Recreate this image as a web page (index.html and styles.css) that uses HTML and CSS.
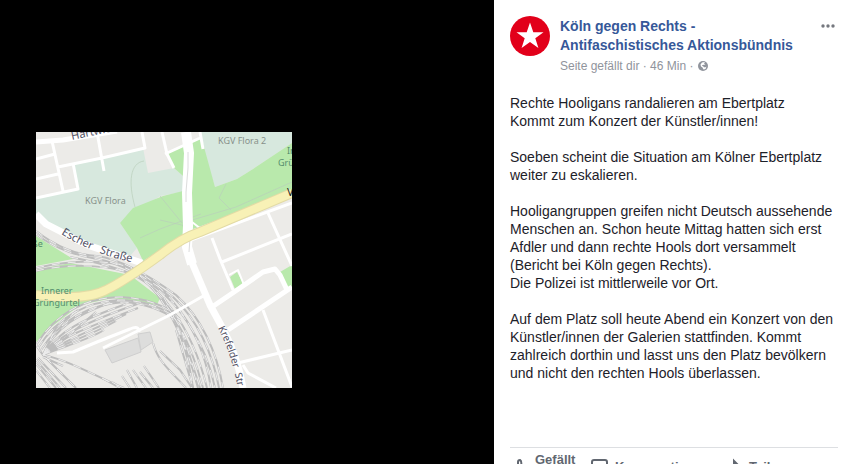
FILE: index.html
```html
<!DOCTYPE html>
<html lang="de">
<head>
    <meta charset="UTF-8">
    <meta name="viewport" content="width=device-width, initial-scale=1.0">
    <title>Köln gegen Rechts</title>
    <link rel="stylesheet" href="styles.css">
</head>
<body>

    <div class="viewer">
        <div class="stage">
            <svg class="map" viewBox="0 0 256 256" role="img" aria-label="Karte">
                <defs>
                    <g id="tracks">
                        <!-- main line -->
                        <path d="M0 99C22 116 42 123 61 124C90 128 122 150 140 163C165 185 181 220 187 256" />
                        <path d="M0 102C22 119 45 124 61 127C90 132 118 151 137 165C161 187 177 222 183 256" />
                        <path d="M34 125C65 131 95 139 113 151C140 167 170 210 179 256" />
                        <path d="M0 136C30 129 60 128 82 132C108 139 126 156 138 171C158 195 170 225 175 256" />
                        <path d="M0 139C30 132 65 132 90 140C120 150 155 190 171 256" />
                        <path d="M96 140C125 158 152 198 167 256" />
                        <path d="M104 144C127 163 148 202 162 256" />
                        <path d="M128 166C140 185 152 220 157 256" />
                        <path d="M140 198L157 256" />
                        <path d="M146 200L164 256" />
                        <!-- outer loop -->
                        <path d="M0 213C20 181 48 166 84 165C112 166 132 175 144 187" />
                        <path d="M2 216C22 184 52 169 86 168C112 169 132 178 144 190" />
                        <path d="M5 218C25 187 55 172 88 170C112 172 128 179 140 188" />
                        <!-- yard -->
                        <path d="M7 223C18 197 40 182 82 168" />
                        <path d="M7 223C22 199 48 187 90 172" />
                        <path d="M7 223C20 205 50 190 104 171" />
                        <path d="M7 223C20 207 55 194 102 176" />
                        <path d="M7 223C25 209 60 197 90 182" />
                        <path d="M7 223C25 212 50 206 80 189" />
                        <path d="M7 223C22 216 48 210 68 198" />
                        <path d="M7 223L30 206L60 180" />
                        <path d="M7 223L20 196L42 178" />
                        <path d="M0 213L7 223L40 256" />
                        <path d="M0 228L24 256M0 232L20 256M0 238L14 256M2 226L30 256" />
                        <path d="M7 223C32 228 55 242 88 256" />
                        <path d="M7 225L27 234" />
                        <path d="M117 211C122 230 134 238 150 256" />
                        <path d="M124 219L144 238L156 256" />
                        <path d="M66 246L84 256M76 250L86 256M91 238L101 256M86 244L94 256M97 238L110 256M104 240L117 256M108 234L123 256M90 250L94 256" />
                    </g>
                    <path id="escher" d="M25 102Q58 123 104 132" />
                    <path id="krefelder" d="M182 196Q198 226 204 270" />
                </defs>

                <rect class="ground" width="256" height="256" />
                <path class="garden" d="M37 32L107 16L112 41L138 36L147 44V60L124 64L84 91L101 116L94 124L51 111L0 84V66L42 57Z" />
                <path class="garden" d="M164 0H256V11L217 37L201 47L179 55L167 17Z" />
                <path class="park" d="M84 91L97 76L127 64L147 59V44L138 36L131 22L157 9L165 4L179 55L201 47L217 37L256 11V60L157 97L107 129L101 116Z" />
                <path class="park" d="M0 104L37 127L0 134Z" />
                <path class="park" d="M0 138L34 131L94 143L124 166L121 173L77 166L44 173L14 196L0 210Z" />
                <path class="park" d="M194 145L201 140L207 151L199 157ZM244 140L256 133V155H251Z" />
                <path class="building" d="M69 218L102 206L105 220L76 231ZM102 202L114 200L117 210L105 218Z" />
                <path class="trail" d="M108 29C94 31 92 50 99 75M124 64L146 91L200 75L256 50M190 52L183 66L195 78M124 88L150 94M104 106L124 97L165 82" />

                <use class="rail" href="#tracks" />
                <use class="rail-gap" href="#tracks" />

                <path class="road" d="M0 27L19 22M16 9L27 59M22 35L66 26L109 16L106 0M0 47L22 42M0 66L42 57L37 31M61 0L68 39" />
                <path class="road" d="M126 0L131 22L138 36M129 22L164 6M164 0L167 17" />
                <path class="road" d="M176 106L184 127L197 158M232 81L256 134M186 130L256 102M227 178L256 255M202 231L256 218M207 233L212 241L240 256" />
                <path class="road" d="M144 112L256 71M67 216L134 183L169 163M21 221L37 220L61 210L94 197Q103 193 103 200" />
                <path class="road thin" d="M193 143L202 138L208 153M156 90L165 97" />
                <path class="road wide" d="M0 10L27 8L81 -1M176 175L204 156L227 140L239 137L244 143L252 160M192 198L256 155" />
                <path class="road wider" d="M0 82L10 92L51 113L106 131" />
                <path class="road main" d="M150 0L153 21L151 61L152 94L151 115L156 132" />
                <path class="road wider" d="M154 126L174 173L186 195Q202 225 207 256" />
                <path class="median" d="M152 20V36L150 60V70M154 106L153 120" />
                <path class="artery-edge" d="M0 163Q50 169 70 158Q87 150 124 123Q145 106 164 100L256 61" />
                <path class="artery" d="M0 163Q50 169 70 158Q87 150 124 123Q145 106 164 100L256 61" />

                <text class="street" transform="translate(36 8) rotate(-12)">Hartwichstraße</text>
                <text class="street"><textPath href="#escher">Escher &#160;&#160;Straße</textPath></text>
                <text class="street small"><textPath href="#krefelder">Krefelder &#160;Str</textPath></text>
                <text class="place" x="49" y="72">KGV Flora</text>
                <text class="place" x="182" y="12">KGV Flora 2</text>
                <text class="place green" x="251" y="22">Innerer</text>
                <text class="place green" x="242" y="34">Grüngürtel</text>
                <text class="place green" x="5" y="162">Innerer</text>
                <text class="place green" x="-3" y="174">Grüngürtel</text>
                <text class="place green" x="-4" y="115">ße</text>
                <text class="street dark" x="251" y="64">V</text>
            </svg>
        </div>

        <main class="post">
            <header class="post-header">
                <svg class="avatar" viewBox="0 0 40 40" aria-hidden="true">
                    <circle cx="20" cy="20" r="20" fill="#e2001a" />
                    <path d="M20 6.500L23.300 16.300H33.500L25.300 22.300L28.400 32L20 26L11.600 32L14.700 22.300L6.500 16.300H16.700Z" fill="#fff" />
                </svg>
                <div class="byline">
                    <a class="author" href="#">Köln gegen Rechts -<br>Antifaschistisches Aktionsbündnis</a>
                    <div class="meta">
                        <span>Seite gefällt dir · 46 Min ·</span>
                        <svg class="globe" viewBox="0 0 10 10" aria-hidden="true">
                            <circle cx="5" cy="5" r="5" fill="#90949c" />
                            <path d="M4 1.500L7 1L6 2.500L7.500 3.500L4.500 4L4 5L8.500 5.500L7.500 8L5.500 8.500L4.500 6.500L3 5.500L2.500 3.500Z" fill="#fff" />
                            <path d="M5 5H9L7.500 6.300H6Z" fill="#90949c" />
                        </svg>
                    </div>
                </div>
                <button class="more" type="button" aria-label="Mehr">
                    <svg width="14" height="4" viewBox="0 0 14 4">
                        <circle cx="2" cy="2" r="1.700" />
                        <circle cx="7" cy="2" r="1.700" />
                        <circle cx="12" cy="2" r="1.700" />
                    </svg>
                </button>
            </header>

            <div class="post-text">
                <p>Rechte Hooligans randalieren am Ebertplatz<br>Kommt zum Konzert der Künstler/innen!</p>
                <p>Soeben scheint die Situation am Kölner Ebertplatz weiter zu eskalieren.</p>
                <p>Hooligangruppen greifen nicht Deutsch aussehende Menschen an. Schon heute Mittag hatten sich erst Afdler und dann rechte Hools dort versammelt (Bericht bei Köln gegen Rechts).<br>Die Polizei ist mittlerweile vor Ort.</p>
                <p>Auf dem Platz soll heute Abend ein Konzert von den Künstler/innen der Galerien stattfinden. Kommt zahlreich dorthin und lasst uns den Platz bevölkern und nicht den rechten Hools überlassen.</p>
            </div>

            <footer class="actions">
                <button class="action" type="button">
                    <svg width="18" height="18" viewBox="0 0 18 18">
                        <path d="M2 9H5V17H2ZM5 10L8 7V4Q8 2 10 2Q12 3 11 8H15Q17 9 15 11Q16 13 14 14Q14 17 12 17H5" />
                    </svg>
                    <span class="like-label">Gefällt mir</span>
                </button>
                <button class="action" type="button">
                    <svg width="18" height="18" viewBox="0 0 18 18">
                        <path d="M4 2H15Q17 2 17 4V11Q17 13 15 13H8L4 17V13Q2 13 2 11V4Q2 2 4 2Z" />
                    </svg>
                    <span>Kommentieren</span>
                </button>
                <button class="action" type="button">
                    <svg width="18" height="18" viewBox="0 0 18 18">
                        <path d="M10 3L16 9L10 15V11Q5 11 2 16Q3 7 10 7Z" />
                    </svg>
                    <span>Teilen</span>
                </button>
            </footer>
        </main>
    </div>

</body>
</html>
```
FILE: styles.css
```css
body {
    margin: 0;
    height: 100vh;
    overflow: hidden;
    background-color: #fff;
    font-family: "Liberation Sans", Arial, sans-serif;
    color: #1d2129;
}
button {
    padding: 0;
    border: none;
    background: none;
    font-family: inherit;
    cursor: pointer;
}
.viewer {
    display: grid;
    grid-template-columns: 1fr 349px;
    min-height: 520px;
}
.stage {
    display: flex;
    align-items: center;
    padding-left: 36px;
    background-color: #000;
}
.map {
    width: 256px;
    height: 256px;
    overflow: hidden;
}
.ground {
    fill: #ecebe8;
}
.garden {
    fill: #d7e8de;
}
.park {
    fill: #b9e9ac;
}
.building {
    fill: #dddddc;
    stroke: #cfcfcf;
}
.trail,
.rail,
.rail-gap,
.road,
.median,
.artery,
.artery-edge {
    fill: none;
}
.trail {
    stroke: #b9cfba;
    opacity: 0.7;
}
.rail {
    stroke: #bdbdbd;
    stroke-width: 2px;
}
.rail-gap {
    stroke: #ededed;
    stroke-width: 1px;
    stroke-dasharray: 8 8;
}
.road {
    stroke: #fff;
    stroke-width: 3px;
    stroke-linejoin: round;
}
.road.thin {
    stroke-width: 2px;
}
.road.wide {
    stroke-width: 5px;
}
.road.wider {
    stroke-width: 7px;
}
.road.main {
    stroke-width: 10px;
}
.median {
    stroke: #dcdcdc;
}
.artery-edge {
    stroke: #e3dba5;
    stroke-width: 10px;
}
.artery {
    stroke: #f8f1b6;
    stroke-width: 8px;
}
.street,
.place {
    font-family: "Noto Sans", sans-serif;
}
.street {
    font-size: 11px;
    fill: #505064;
}
.street.small {
    font-size: 10px;
}
.street.dark {
    fill: #222;
}
.place {
    font-size: 9px;
    fill: #87918b;
}
.place.green {
    fill: #558e6c;
}
.post {
    padding: 16px 5px 0 16px;
}
.post-header {
    display: flex;
    align-items: flex-start;
    gap: 10px;
}
.avatar {
    width: 40px;
    height: 40px;
}
.byline {
    flex: 1;
    padding-top: 1px;
}
.author {
    display: block;
    color: #365899;
    font-size: 14px;
    font-weight: bold;
    line-height: 19px;
    text-decoration: none;
}
.author:hover {
    text-decoration: underline;
}
.meta {
    display: flex;
    align-items: center;
    gap: 5px;
    margin-top: 1px;
    color: #90949c;
    font-size: 12px;
    line-height: 20px;
}
.globe {
    width: 10px;
    height: 10px;
}
.more {
    display: flex;
    padding: 8px 3px;
}
.more svg {
    fill: #75787f;
}
.post-text {
    padding-top: 18px;
    font-size: 14px;
    line-height: 18px;
}
.post-text p {
    margin: 0 0 18px;
}
.actions {
    display: grid;
    grid-template-columns: 80px 134px 1fr;
    align-items: center;
    margin-top: 65px;
    padding-top: 5px;
    border-top: 1px solid #dddfe2;
}
.action {
    display: flex;
    align-items: center;
    gap: 7px;
    color: #616770;
    font-size: 13px;
    font-weight: bold;
    line-height: 14px;
    text-align: left;
}
.action svg {
    flex: none;
    fill: none;
    stroke: #616770;
    stroke-width: 2px;
}
.like-label {
    width: 44px;
}
```
